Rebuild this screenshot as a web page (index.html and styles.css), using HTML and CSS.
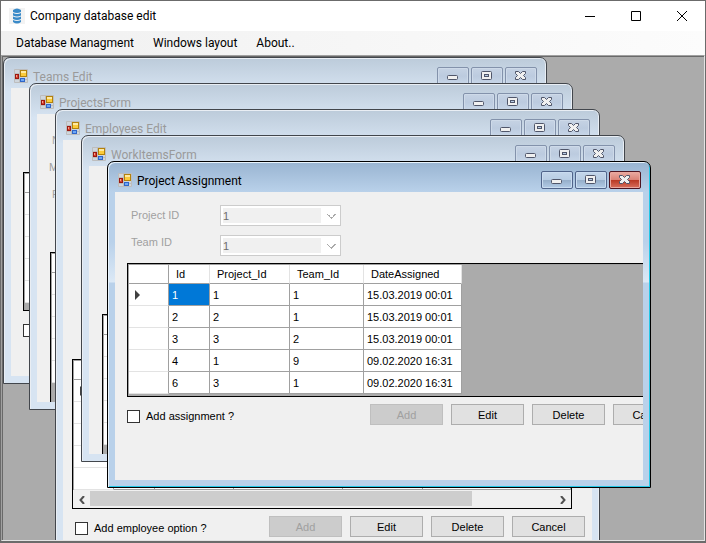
FILE: index.html
```
<!DOCTYPE html>
<html lang="en">
<head>
<meta charset="utf-8">
<title>Company database edit</title>
<link rel="stylesheet" href="styles.css">
</head>
<body>
<svg class="defs" aria-hidden="true">
  <symbol id="form-icon" viewBox="0 0 14 14">
    <path d="M.5 .5h13v13H.5zM.5 4.500h13M5.500 .5v13M.5 10.500h13" fill="#cfd6dd" stroke="#bdbdbd"/>
    <rect x="6.500" y="1.500" width="6" height="6" fill="#fbcb3a" stroke="#b3820c"/>
    <path d="M7 2h5v2H7z" fill="#ffe9a0"/>
    <rect x="1.500" y="5.500" width="3" height="4" fill="#d8442f" stroke="#9c1710"/>
    <path d="M2 6h1v2H2z" fill="#f3a08f"/>
    <rect x="6.500" y="9.500" width="4" height="3" fill="#6fa8f5" stroke="#2f66c9"/>
  </symbol>
  <symbol id="min" viewBox="0 0 12 10">
    <rect x=".5" y="4.500" width="10" height="4" rx="1" fill="#f0f0f0" stroke="#50566a"/>
  </symbol>
  <symbol id="max" viewBox="0 0 12 10">
    <rect x=".5" y=".5" width="10" height="8" rx="1" fill="#f0f0f0" stroke="#50566a"/>
    <rect x="3.500" y="3.500" width="4" height="2" fill="#b9cde6" stroke="#50566a"/>
  </symbol>
  <symbol id="close" viewBox="0 0 12 10">
    <path d="M.5 .5h3l2 2 2-2h3v2l-2 2 2 2v2h-3l-2-2-2 2h-3v-2l2-2-2-2z" fill="#f0f0f0" stroke="#50566a"/>
  </symbol>
</svg>
<div class="app">
  <header class="app-title">
    <svg class="app-icon" viewBox="0 0 16 16" aria-hidden="true">
      <path d="M0 0h16v16H0z" fill="#f3f3f3"/>
      <path d="M4 2q4-3 8 0v2q-4 2-8 0zM4 5q4 2 8 0v2.500q-4 2-8 0zM4 8.500q4 2 8 0V11q-4 2-8 0zM4 12q4 2 8 0v2q-4 3-8 0z" fill="#3a8ac8"/>
    </svg>
    <h1>Company database edit</h1>
    <div class="app-controls">
      <button aria-label="Minimize"><svg viewBox="0 0 10 10"><path d="M0 5.500h10"/></svg></button>
      <button aria-label="Maximize"><svg viewBox="0 0 10 10"><path d="M.5 .5h9v9h-9z"/></svg></button>
      <button aria-label="Close"><svg viewBox="0 0 10 10"><path d="M0 0l10 10M10 0L0 10"/></svg></button>
    </div>
  </header>
  <nav class="menu">
    <button>Database Managment</button>
    <button>Windows layout</button>
    <button>About..</button>
  </nav>
  <main class="desktop">
    <section class="window teams">
      <header class="bar"><svg class="form-icon"><use href="#form-icon"/></svg><h2>Teams Edit</h2>
        <button aria-label="Minimize"><svg><use href="#min"/></svg></button><button aria-label="Maximize"><svg><use href="#max"/></svg></button><button aria-label="Close"><svg><use href="#close"/></svg></button></header>
      <div class="content">
        <div class="grid"><table aria-label="Teams">
          <tr><th></th></tr><tr><td></td></tr><tr><td></td></tr><tr><td></td></tr><tr><td></td></tr><tr><td></td></tr>
        </table></div>
        <input type="checkbox" aria-label="Add team">
      </div>
    </section>

    <section class="window projects">
      <header class="bar"><svg class="form-icon"><use href="#form-icon"/></svg><h2>ProjectsForm</h2>
        <button aria-label="Minimize"><svg><use href="#min"/></svg></button><button aria-label="Maximize"><svg><use href="#max"/></svg></button><button aria-label="Close"><svg><use href="#close"/></svg></button></header>
      <div class="content">
        <div class="captions"><span>N</span><span class="wide">M</span><span>P</span></div>
        <div class="grid"><table aria-label="Projects">
          <tr><th></th></tr><tr><td></td></tr><tr><td></td></tr><tr><td></td></tr><tr><td></td></tr><tr><td></td></tr>
        </table></div>
      </div>
    </section>

    <section class="window employees">
      <header class="bar"><svg class="form-icon"><use href="#form-icon"/></svg><h2>Employees Edit</h2>
        <button aria-label="Minimize"><svg><use href="#min"/></svg></button><button aria-label="Maximize"><svg><use href="#max"/></svg></button><button aria-label="Close"><svg><use href="#close"/></svg></button></header>
      <div class="content">
        <div class="grid">
          <table aria-label="Employees">
            <colgroup><col class="c-head"><col class="c-id"><col class="c-a"><col class="c-b"><col class="c-c"><col></colgroup>
            <tr><th></th><th></th><th></th><th></th><th></th><th></th></tr>
            <tr><td><svg class="marker" viewBox="0 0 5 10"><path d="M0 0l5 5-5 5z"/></svg></td><td></td><td></td><td></td><td></td><td></td></tr>
            <tr><td></td><td></td><td></td><td></td><td></td><td></td></tr>
            <tr><td></td><td></td><td></td><td></td><td></td><td></td></tr>
            <tr><td></td><td></td><td></td><td></td><td></td><td></td></tr>
            <tr><td></td><td></td><td></td><td></td><td></td><td></td></tr>
          </table>
          <div class="scroll">
            <button aria-label="Scroll left"><svg viewBox="0 0 6 8"><path d="M5 0L1.500 4 5 8"/></svg></button>
            <div class="track"><div class="thumb"></div></div>
            <button aria-label="Scroll right"><svg viewBox="0 0 6 8"><path d="M1 0l3.500 4L1 8"/></svg></button>
          </div>
        </div>
        <div class="actions">
          <label><input type="checkbox"> Add employee option ?</label>
          <button disabled>Add</button><button>Edit</button><button>Delete</button><button>Cancel</button>
        </div>
      </div>
    </section>

    <section class="window work">
      <header class="bar"><svg class="form-icon"><use href="#form-icon"/></svg><h2>WorkItemsForm</h2>
        <button aria-label="Minimize"><svg><use href="#min"/></svg></button><button aria-label="Maximize"><svg><use href="#max"/></svg></button><button aria-label="Close"><svg><use href="#close"/></svg></button></header>
      <div class="content">
        <div class="grid"><table aria-label="Work items">
          <tr><th></th></tr><tr><td></td></tr><tr><td></td></tr><tr><td></td></tr><tr><td></td></tr><tr><td></td></tr>
        </table></div>
      </div>
    </section>

    <section class="window assignment active">
      <header class="bar"><svg class="form-icon"><use href="#form-icon"/></svg><h2>Project Assignment</h2>
        <button aria-label="Minimize"><svg><use href="#min"/></svg></button><button aria-label="Maximize"><svg><use href="#max"/></svg></button><button class="x" aria-label="Close"><svg><use href="#close"/></svg></button></header>
      <div class="content">
        <div class="fields">
          <div class="labels">
            <label for="project">Project ID</label>
            <label for="team">Team ID</label>
          </div>
          <div class="inputs">
            <select id="project" disabled><option>1</option></select>
            <select id="team" disabled><option>1</option></select>
          </div>
        </div>
        <div class="grid">
          <table>
            <colgroup><col class="c-head"><col class="c-id"><col class="c-project"><col class="c-team"><col class="c-date"></colgroup>
            <thead><tr><th></th><th>Id</th><th>Project_Id</th><th>Team_Id</th><th>DateAssigned</th></tr></thead>
            <tbody>
              <tr><td><svg class="marker" viewBox="0 0 5 10"><path d="M0 0l5 5-5 5z"/></svg></td><td class="selected">1</td><td>1</td><td>1</td><td>15.03.2019 00:01</td></tr>
              <tr><td></td><td>2</td><td>2</td><td>1</td><td>15.03.2019 00:01</td></tr>
              <tr><td></td><td>3</td><td>3</td><td>2</td><td>15.03.2019 00:01</td></tr>
              <tr><td></td><td>4</td><td>1</td><td>9</td><td>09.02.2020 16:31</td></tr>
              <tr><td></td><td>6</td><td>3</td><td>1</td><td>09.02.2020 16:31</td></tr>
            </tbody>
          </table>
        </div>
        <div class="actions">
          <label><input type="checkbox"> Add assignment ?</label>
          <button disabled>Add</button><button>Edit</button><button>Delete</button><button>Cancel</button>
        </div>
      </div>
    </section>
  </main>
</div>
</body>
</html>
```
FILE: styles.css
```
* { box-sizing: border-box; }

body {
  margin: 0;
  font: 12px/16px Roboto, "Open Sans", sans-serif;
  color: #000;
}

h1, h2 { margin: 0; font: inherit; }
button, input, select { margin: 0; padding: 0; font: inherit; color: inherit; }
svg { display: block; }
.defs { position: absolute; width: 0; height: 0; }

.app {
  height: 100vh;
  display: flex;
  flex-direction: column;
  border: 1px solid #6b6b6b;
  border-bottom-width: 2px;
  background: #fff;
  overflow: hidden;
}

.app-title {
  flex: none;
  height: 30px;
  display: flex;
  align-items: center;
  padding-left: 8px;
}
.app-icon { width: 16px; height: 16px; margin-right: 5px; }
.app-title h1 { flex: 1; }
.app-controls { display: flex; }
.app-controls button {
  width: 46px;
  height: 30px;
  display: grid;
  place-items: center;
  border: 0;
  background: none;
}
.app-controls svg {
  width: 10px;
  height: 10px;
  fill: none;
  stroke: #000;
}

.menu {
  flex: none;
  height: 24px;
  display: flex;
  align-items: center;
  gap: 19px;
  padding-left: 15px;
  background: linear-gradient(to right, #f0f0f0, #fcfcfc);
}
.menu button { border: 0; background: none; }

.desktop {
  position: relative;
  flex: 1;
  overflow: hidden;
  border: 1px solid #a0a0a0;
  border-right-color: #e3e3e3;
  border-bottom-color: #e3e3e3;
  box-shadow: inset 1px 1px #696969;
  background: #ababab;
}

/* Child windows float freely on the desktop */
.window {
  position: absolute;
  width: 544px;
  height: 327px;
  display: flex;
  flex-direction: column;
  padding: 0 7px 7px;
  border: 1px solid #42464c;
  border-radius: 7px 7px 0 0;
  background: linear-gradient(#bccbda, #d7e4f2 34px);
  box-shadow: inset 1px 1px #e9eef4, inset -1px 0 #e9eef4;
  color: #9a9a9a;
}
.teams { left: 1px; top: 1px; }
.projects { left: 27px; top: 27px; }
.employees { left: 53px; top: 53px; width: 545px; height: 460px; }
.work { left: 79px; top: 79px; }
.assignment { left: 105px; top: 105px; }
.window.active {
  border-color: #000;
  background:
    linear-gradient(#99b4d1, #b9d1ea 30px, transparent 30px),
    linear-gradient(#b9d1ea 80px, #dce9f6 120px, #b9d1ea 121px);
  box-shadow: inset 1px 1px #e8f3fc, inset -1px -1px #22c7e6;
  color: #000;
}

.bar {
  flex: none;
  height: 30px;
  display: flex;
  align-items: center;
  gap: 2px;
  padding: 6px 2px 0 3px;
}
.form-icon { width: 14px; height: 14px; margin-right: 3px; }
.bar h2 { flex: 1; padding-top: 2px; }
.bar button {
  width: 32px;
  height: 18px;
  display: flex;
  align-items: flex-start;
  justify-content: center;
  padding-top: 3px;
  border: 1px solid #8392ab;
  border-radius: 2px;
  background: linear-gradient(#c6d3e4, #bccbdf 50%, #c8d6e8);
  box-shadow: inset 0 0 0 1px #cedae9;
}
.bar button svg { width: 12px; height: 10px; }
.active .bar button {
  border-color: #50648a;
  background: linear-gradient(#c4d6ea, #b8cde4 48%, #95aec9 50%, #b2cbe6);
  box-shadow: inset 0 0 0 1px #c9dcf0;
}
.active .bar .x {
  border-color: #4d1420;
  background: linear-gradient(#eaaba2, #db8377 48%, #b83722 50%, #d9705e);
  box-shadow: inset 0 0 0 1px #e9a79e;
}

.content {
  flex: 1;
  min-height: 0;
  overflow: hidden;
  display: flex;
  flex-direction: column;
  background: #f0f0f0;
  font: 11px/14px "Liberation Sans", Arial, sans-serif;
  color: #000;
}

.grid {
  flex: none;
  border: 1px solid #000;
  background: #ababab;
  box-shadow: inset 1px 1px #a0a0a0;
}
table {
  border-collapse: separate;
  border-spacing: 0;
  table-layout: fixed;
  width: 100%;
  padding: 1px 0 0 1px;
}
th, td {
  padding: 0 3px;
  text-align: left;
  font-weight: normal;
  background: #fff;
  border-right: 1px solid #a0a0a0;
  border-bottom: 1px solid #a0a0a0;
}
th { height: 19px; padding-left: 7px; border-right-color: #e3e3e3; }
td { height: 22px; }
th:first-child { border-right-color: #a0a0a0; }
td:first-child { border-bottom-color: #e3e3e3; }
.selected { background: #0078d7; color: #fff; }
.marker { width: 5px; height: 10px; margin-left: 3px; fill: #404040; }

.c-head { width: 40px; }
.c-id { width: 41px; }
.c-project { width: 80px; }
.c-team { width: 74px; }
.c-date { width: 98px; }
.c-a { width: 79px; }
.c-b { width: 109px; }
.c-c { width: 80px; }

input[type="checkbox"] {
  flex: none;
  appearance: none;
  width: 13px;
  height: 13px;
  border: 1px solid #333;
  background: #fff;
}

.teams .grid { width: 500px; height: 139px; margin: 84px 0 13px 12px; }
.teams input { margin-left: 12px; }

.captions {
  display: flex;
  flex-direction: column;
  gap: 13px;
  margin: 19px 0 51px 15px;
  color: #a0a0a0;
}
.captions .wide { margin-left: -3px; }
.projects .grid { width: 500px; height: 180px; margin-left: 13px; }

.employees .grid { width: 500px; margin: 219px 0 7px 9px; }
.scroll { display: flex; height: 18px; padding-top: 1px; background: #f0f0f0; }
.scroll button {
  width: 17px;
  display: grid;
  place-items: center;
  border: 0;
  background: none;
}
.scroll svg { width: 6px; height: 8px; fill: none; stroke: #505050; stroke-width: 2; }
.track { flex: 1; }
.thumb { width: 382px; height: 15px; background: #cdcdcd; }

.work .grid { width: 500px; height: 180px; margin: 148px 0 0 13px; }

.fields {
  display: flex;
  margin: 13px 0 7px 16px;
}
.labels, .inputs { display: flex; flex-direction: column; }
.labels { width: 89px; gap: 13px; padding-top: 3px; color: #a0a0a0; }
.inputs { width: 121px; gap: 9px; }
.fields select {
  appearance: none;
  height: 21px;
  padding-left: 2px;
  border: 1px solid #ccc;
  border-radius: 0;
  opacity: 1;
  color: #6d6d6d;
  background:
    linear-gradient(45deg, transparent 45%, #aaa 45% 60%, transparent 60%) 106px 8px / 5px 5px no-repeat,
    linear-gradient(-45deg, transparent 45%, #aaa 45% 60%, transparent 60%) 110px 8px / 5px 5px no-repeat,
    linear-gradient(#f0f0f0, #f0f0f0) 2px 2px / 98px 15px no-repeat,
    #fff;
}
.assignment .grid { width: 560px; height: 134px; margin: 0 0 7px 12px; }
.assignment table { width: 334px; }

.actions { display: flex; flex: none; gap: 8px; }
.actions label {
  flex: none;
  width: 235px;
  height: 24px;
  display: flex;
  align-items: center;
  gap: 6px;
}
.assignment .actions { margin-left: 12px; }
.employees .actions { margin-left: 12px; }
.employees .actions label { width: 186px; }
.actions button {
  flex: none;
  width: 73px;
  height: 21px;
  border: 1px solid #adadad;
  background: #e1e1e1;
}
.actions button:disabled { border-color: #bfbfbf; background: #ccc; color: #a0a0a0; }
```
